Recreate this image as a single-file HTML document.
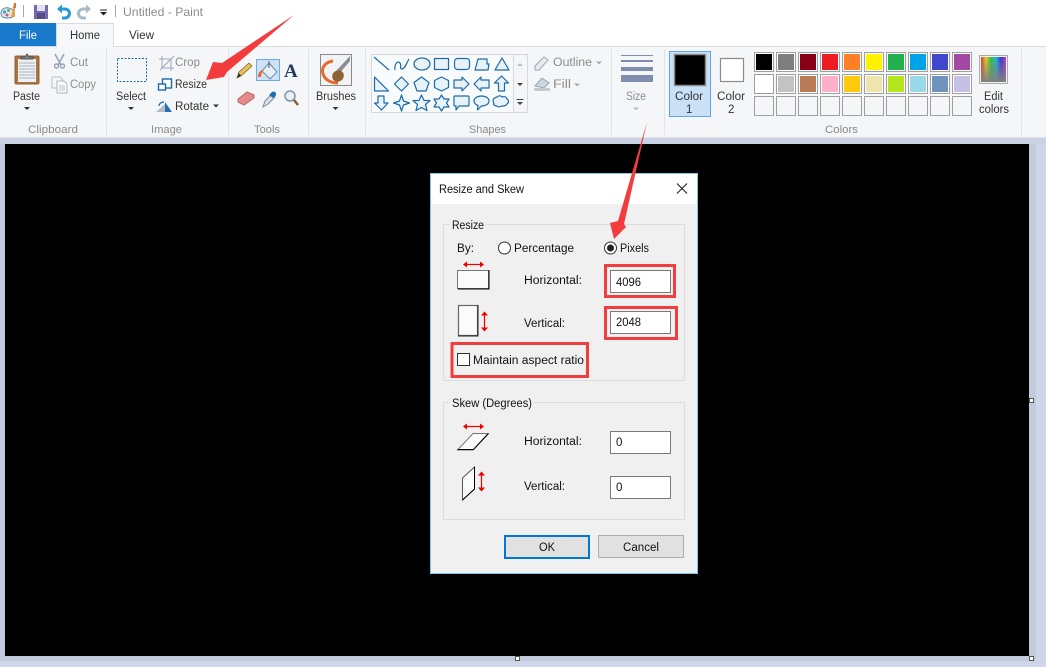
<!DOCTYPE html>
<html><head><meta charset="utf-8"><title>Untitled - Paint</title>
<style>
html,body{margin:0;padding:0;background:#cdd7e8;overflow:hidden}
svg{display:block}
text{font-family:"Liberation Sans",sans-serif;font-size:11.5px;fill:#333}
.g{fill:#8c8c8c}
.l{fill:#8a8a8a;font-size:11px}
.d{fill:#111;font-size:11.5px}
.s{fill:#e8f3f9;stroke:#1f69a8;stroke-width:1.2;stroke-linejoin:round}
</style></head><body>
<svg width="1046" height="667" viewBox="0 0 1046 667" xmlns="http://www.w3.org/2000/svg">
<rect width="1046" height="667" fill="#cdd7e8"/>
<rect x="0" y="138" width="1036" height="523" fill="#c1cbdc"/>
<rect x="0" y="138" width="1046" height="6" fill="#c9d2e2"/>
<!-- title bar -->
<rect width="1046" height="46" fill="#fff"/>
<rect x="0" y="46" width="1046" height="92" fill="#f5f6f7"/>
<rect x="0" y="46" width="1046" height="1" fill="#dadbdc"/>
<rect x="0" y="137" width="1046" height="1" fill="#dde0e5"/>
<!-- QAT icons -->
<path d="M1 13c0-4 4-6 8-5s5 3 5 6-3 4-6 4-7 0-7-5z" fill="#dfe8ee" stroke="#5a8aa8"/>
<circle cx="4.500" cy="12" r="1.600" fill="#36a3d9"/><circle cx="8.500" cy="10.500" r="1.500" fill="#62b34e"/><circle cx="7" cy="15" r="1.500" fill="#e2574c"/>
<path d="M11 17l2-9 2 0 0 9z" fill="#e8a04a"/><path d="M13 8l1-5 2 0 0 5z" fill="#d9792d"/>
<rect x="23" y="5" width="1" height="12" fill="#a5a5a5"/>
<rect x="34" y="5" width="14" height="14" fill="#7468b0"/><rect x="37" y="5" width="8" height="6" fill="#e4e2f0"/><rect x="37" y="13" width="8" height="6" fill="#55507f"/>
<path d="M60 9h5a4.500 4.500 0 0 1 0 9h-3" fill="none" stroke="#2b97d9" stroke-width="3"/><path d="M57 9l5-4.500v9z" fill="#2b97d9"/>
<path d="M88 9h-5a4.500 4.500 0 0 0 0 9h3" fill="none" stroke="#a9bac8" stroke-width="3"/><path d="M91 9l-5-4.500v9z" fill="#a9bac8"/>
<path d="M100 10h7" stroke="#222"/><path d="M100 12h7l-3.500 3.500z" fill="#222"/>
<rect x="115" y="5" width="1" height="12" fill="#a5a5a5"/>
<text x="123" y="16" class="g" style="font-size:12px" textLength="80" lengthAdjust="spacingAndGlyphs">Untitled - Paint</text>
<!-- tabs -->
<rect x="0" y="23" width="56" height="23" fill="#1979ca"/>
<text x="19" y="39" style="fill:#fff;font-size:11.500px" textLength="18" lengthAdjust="spacingAndGlyphs">File</text>
<path d="M56.500 47V23.500H113.500V47" fill="#f5f6f7" stroke="#dadbdc"/>
<rect x="57" y="24" width="56" height="23" fill="#f7f8f9"/>
<text x="70" y="39" textLength="30" lengthAdjust="spacingAndGlyphs">Home</text>
<text x="129" y="39" textLength="25" lengthAdjust="spacingAndGlyphs">View</text>
<!-- separators -->
<g fill="#e2e3e5"><rect x="106" y="49" width="1" height="86"/><rect x="228" y="49" width="1" height="86"/><rect x="308" y="49" width="1" height="86"/><rect x="365" y="49" width="1" height="86"/><rect x="611" y="49" width="1" height="86"/><rect x="664" y="49" width="1" height="86"/><rect x="1021" y="49" width="1" height="86"/></g>
<!-- clipboard -->
<rect x="15" y="56" width="24" height="28" rx="1.500" fill="#a9743f" stroke="#8e6136"/>
<rect x="18" y="59" width="18" height="23" fill="#eef1f4"/>
<path d="M19 63h16M19 66h16M19 69h16M19 72h16M19 75h16M19 78h16" stroke="#a9b4c0"/>
<path d="M21 59v-2h4l2-3 2 3h4v2z" fill="#80868c" stroke="#555"/>
<text x="13" y="100" textLength="27" lengthAdjust="spacingAndGlyphs">Paste</text>
<path d="M24 107h6l-3 3z" fill="#333"/>
<path d="M55 54l6 11M64 54l-6 11" stroke="#9aa7b6" stroke-width="1.600" fill="none"/><circle cx="56.500" cy="66" r="2" fill="none" stroke="#8ea1b6" stroke-width="1.400"/><circle cx="62.500" cy="66" r="2" fill="none" stroke="#8ea1b6" stroke-width="1.400"/>
<text x="70" y="66" class="g" textLength="18" lengthAdjust="spacingAndGlyphs">Cut</text>
<path d="M52 77h8l3 3v8h-11z" fill="#f4f6f8" stroke="#b4c0cc"/><path d="M57 81h7l3 3v9h-10z" fill="#fafbfc" stroke="#a9b6c4"/><path d="M59 86h6M59 88h6M59 90h6" stroke="#b4c0cc"/>
<text x="70" y="88" class="g" textLength="26" lengthAdjust="spacingAndGlyphs">Copy</text>
<text x="28" y="133" class="l" textLength="50" lengthAdjust="spacingAndGlyphs">Clipboard</text>
<!-- image -->
<rect x="117.500" y="58.500" width="29" height="23" fill="none" stroke="#1f69a8" stroke-dasharray="2 1.500"/>
<text x="116" y="100" textLength="30" lengthAdjust="spacingAndGlyphs">Select</text>
<path d="M128 107h6l-3 3z" fill="#333"/>
<path d="M162 56v12h12M159 59h12v12M160 70l14-14" fill="none" stroke="#9aa7bd"/>
<text x="175" y="66" class="g" textLength="25" lengthAdjust="spacingAndGlyphs">Crop</text>
<rect x="162.500" y="79" width="9" height="9" fill="#fff" stroke="#1f69a8" stroke-width="1.400"/>
<rect x="158.500" y="84" width="7" height="6" fill="#fff" stroke="#1f69a8" stroke-width="1.400"/>
<text x="175" y="88" textLength="32" lengthAdjust="spacingAndGlyphs">Resize</text>
<path d="M156 112l9-8v8z" fill="#b4bbc2"/><path d="M165 102l7 10h-7z" fill="#2372b9"/><path d="M159 106c0-2 2-4 5-4" stroke="#2372b9" fill="none" stroke-width="1.400"/>
<text x="175" y="110" textLength="34" lengthAdjust="spacingAndGlyphs">Rotate</text>
<path d="M213 104.500h6l-3 3z" fill="#333"/>
<text x="151" y="133" class="l" textLength="31" lengthAdjust="spacingAndGlyphs">Image</text>
<!-- tools -->
<rect x="256.500" y="59.500" width="23" height="21" fill="#cfe2f5" stroke="#70a9e3"/>
<path d="M237 78l2-6 10-9 3 3-10 9z" fill="#eec04f" stroke="#7c6a3b" stroke-width=".8"/>
<path d="M237 78l1.500-5 3 3z" fill="#333"/>
<path d="M269 63l8 9-7 7-8-8z" fill="#e6eff6" stroke="#6d8cad"/><path d="M258 77c0-4 2-7 6-7-2 2-3 4-3 7z" fill="#e8672a"/><path d="M269 61v7" stroke="#556"/>
<text x="284" y="77" style="font-family:'Liberation Serif',serif;font-size:19px;font-weight:bold;fill:#203a5e">A</text>
<path d="M238 99l9-7 7 3v3l-10 7-6-3z" fill="#e48a8a" stroke="#bd6a6a"/>
<path d="M263 107l2-6 7-7 3 3-7 7z" fill="#d9e3ec" stroke="#7a8a9a"/><path d="M269 95l3-3c2-1 4 0 4 2s-1 2-3 4z" fill="#1e6cb4"/>
<circle cx="290" cy="96" r="5" fill="#e8f1f8" stroke="#8096a9" stroke-width="1.500"/><path d="M294 100l4 5" stroke="#8c5d34" stroke-width="2.500"/>
<text x="254" y="133" class="l" textLength="26" lengthAdjust="spacingAndGlyphs">Tools</text>
<!-- brushes -->
<rect x="320.500" y="54.500" width="31" height="31" fill="#f1f3f4" stroke="#8a8a8a"/>
<path d="M350 56l-14 15 3 3 11-13z" fill="#8a8f96"/>
<path d="M333 61C325 62 321 68 323 74C325 80 331 83 338 83" fill="none" stroke="#e8672a" stroke-width="3"/>
<ellipse cx="338" cy="76" rx="6" ry="5.500" fill="#8e6135" transform="rotate(-40 338 76)"/>
<text x="316" y="100" textLength="40" lengthAdjust="spacingAndGlyphs">Brushes</text>
<path d="M332.500 107h6l-3 3z" fill="#333"/>
<!-- shapes -->
<rect x="371.500" y="54.500" width="156" height="58" fill="#f7fbfc" stroke="#d6d8da"/>
<rect x="513" y="55" width="14" height="57" fill="#f5f6f7"/><rect x="513" y="55" width="1" height="57" fill="#d6d8da"/>
<path d="M517 66l3-3 3 3z" fill="#bbb"/><path d="M517 83h6l-3 3z" fill="#444"/><path d="M516.500 99.500h7" stroke="#444"/><path d="M517 102h6l-3 3z" fill="#444"/>
<path d="M374 57l15 13" fill="none" stroke="#1f69a8" stroke-width="1.200"/>
<path d="M395 70c-1-6 3-10 5-7s-1 6 2 6 5-7 7-10" fill="none" stroke="#1f69a8" stroke-width="1.200"/>
<ellipse class="s" cx="422" cy="64" rx="8" ry="6"/>
<rect class="s" x="434.500" y="58.500" width="14" height="11"/>
<rect class="s" x="454.500" y="58.500" width="15" height="11" rx="3"/>
<path class="s" d="M475 70l3-11h9v5h2l-1 6z"/>
<path class="s" d="M502 58l7 12h-14z"/>
<path class="s" d="M374.500 77v14h14z"/>
<path class="s" d="M401.500 77l7 7-7 7-7-7z"/>
<path class="s" d="M421.500 77l7.500 5.500-3 8.500h-9l-3-8.500z"/>
<path class="s" d="M441.500 77l7 3.500v7l-7 3.500-7-3.500v-7z"/>
<path class="s" d="M454 80h8v-3l7 7-7 7v-3h-8z"/>
<path class="s" d="M489 80h-8v-3l-7 7 7 7v-3h8z"/>
<path class="s" d="M501.500 76l7 7h-4v8h-6v-8h-4z"/>
<path class="s" d="M378 96v7h4l-6.500 7-7-7h3.500v-7z" transform="translate(6,0)"/>
<path class="s" d="M401.500 95l2 6 6 2-6 2-2 6-2-6-6-2 6-2z"/>
<path class="s" d="M421.500 95l2.500 5.500h6l-4.500 4 1.500 6-5.500-3-5.500 3 1.500-6-4.500-4h6z"/>
<path class="s" d="M441.500 95l2.500 4h5l-2.500 4 2.500 4h-5l-2.500 4-2.500-4h-5l2.500-4-2.500-4h5z"/>
<path class="s" d="M455 96h13q1 0 1 1v8q0 1-1 1h-9l-3 4v-4h-1q-1 0-1-1v-8q0-1 1-1z"/>
<path class="s" d="M481.500 96c4 0 7.500 2 7.500 5s-3.500 5-7.500 5l-4 4 .5-4.500c-2-.5-4-2.500-4-4.500 0-3 3.500-5 7.500-5z"/>
<path class="s" d="M497 97c2-2 4-1 5 0 2-1 5 0 5 2 2 1 2 4 0 5-1 2-3 2-5 2-2 1-4 1-5 0-3 0-4-2-3-3-2-2-1-5 3-6z"/>
<text x="469" y="133" class="l" textLength="37" lengthAdjust="spacingAndGlyphs">Shapes</text>
<path d="M535 70l0-4 9-9 4 3-9 10z" fill="#e7ecf1" stroke="#9aa7b6"/>
<text x="553" y="66" class="g" textLength="39" lengthAdjust="spacingAndGlyphs">Outline</text><path d="M596 61.500h6l-3 3z" fill="#aaa"/>
<path d="M535 86l7-8 7 5-5 5z" fill="#cdd5de" stroke="#98a5b3"/><rect x="534" y="88" width="16" height="3" fill="#c2cad3"/>
<text x="553" y="88" class="g" textLength="18" lengthAdjust="spacingAndGlyphs">Fill</text><path d="M574 83.500h6l-3 3z" fill="#aaa"/>
<!-- size -->
<rect x="621" y="55" width="32" height="1" fill="#7f8eaf"/><rect x="621" y="60" width="32" height="2" fill="#7f8eaf"/><rect x="621" y="67" width="32" height="4" fill="#7f8eaf"/><rect x="621" y="75" width="32" height="7" fill="#7f8eaf"/>
<text x="626" y="100" class="g" textLength="20" lengthAdjust="spacingAndGlyphs">Size</text>
<path d="M633 107.500h6l-3 3z" fill="#bbb"/>
<!-- colors -->
<rect x="669.500" y="51.500" width="41" height="65" fill="#c9e0f7" stroke="#62a3e6"/>
<rect x="674.500" y="54.500" width="31" height="31" fill="#000" stroke="#8c8c8c" stroke-width="1.500"/>
<text x="675" y="100" textLength="28" lengthAdjust="spacingAndGlyphs">Color</text><text x="686" y="113">1</text>
<rect x="720.500" y="58.500" width="23" height="23" fill="#fff" stroke="#8c8c8c" stroke-width="1.200"/>
<text x="717" y="100" textLength="28" lengthAdjust="spacingAndGlyphs">Color</text><text x="728" y="113">2</text>
<g stroke="#a0a0a0" fill="#fff">
<rect x="754.500" y="52.500" width="19" height="19"/><rect x="776.500" y="52.500" width="19" height="19"/><rect x="798.500" y="52.500" width="19" height="19"/><rect x="820.500" y="52.500" width="19" height="19"/><rect x="842.500" y="52.500" width="19" height="19"/><rect x="864.500" y="52.500" width="19" height="19"/><rect x="886.500" y="52.500" width="19" height="19"/><rect x="908.500" y="52.500" width="19" height="19"/><rect x="930.500" y="52.500" width="19" height="19"/><rect x="952.500" y="52.500" width="19" height="19"/>
<rect x="754.500" y="74.500" width="19" height="19"/><rect x="776.500" y="74.500" width="19" height="19"/><rect x="798.500" y="74.500" width="19" height="19"/><rect x="820.500" y="74.500" width="19" height="19"/><rect x="842.500" y="74.500" width="19" height="19"/><rect x="864.500" y="74.500" width="19" height="19"/><rect x="886.500" y="74.500" width="19" height="19"/><rect x="908.500" y="74.500" width="19" height="19"/><rect x="930.500" y="74.500" width="19" height="19"/><rect x="952.500" y="74.500" width="19" height="19"/>
</g>
<g stroke="#a0a0a0" fill="#f5f6f7">
<rect x="754.500" y="96.500" width="19" height="19"/><rect x="776.500" y="96.500" width="19" height="19"/><rect x="798.500" y="96.500" width="19" height="19"/><rect x="820.500" y="96.500" width="19" height="19"/><rect x="842.500" y="96.500" width="19" height="19"/><rect x="864.500" y="96.500" width="19" height="19"/><rect x="886.500" y="96.500" width="19" height="19"/><rect x="908.500" y="96.500" width="19" height="19"/><rect x="930.500" y="96.500" width="19" height="19"/><rect x="952.500" y="96.500" width="19" height="19"/>
</g>
<rect x="756" y="54" width="16" height="16" fill="#000"/><rect x="778" y="54" width="16" height="16" fill="#7f7f7f"/><rect x="800" y="54" width="16" height="16" fill="#880015"/><rect x="822" y="54" width="16" height="16" fill="#ed1c24"/><rect x="844" y="54" width="16" height="16" fill="#ff7f27"/><rect x="866" y="54" width="16" height="16" fill="#fff200"/><rect x="888" y="54" width="16" height="16" fill="#22b14c"/><rect x="910" y="54" width="16" height="16" fill="#00a2e8"/><rect x="932" y="54" width="16" height="16" fill="#3f48cc"/><rect x="954" y="54" width="16" height="16" fill="#a349a4"/>
<rect x="756" y="76" width="16" height="16" fill="#fff"/><rect x="778" y="76" width="16" height="16" fill="#c3c3c3"/><rect x="800" y="76" width="16" height="16" fill="#b97a57"/><rect x="822" y="76" width="16" height="16" fill="#ffaec9"/><rect x="844" y="76" width="16" height="16" fill="#ffc90e"/><rect x="866" y="76" width="16" height="16" fill="#efe4b0"/><rect x="888" y="76" width="16" height="16" fill="#b5e61d"/><rect x="910" y="76" width="16" height="16" fill="#99d9ea"/><rect x="932" y="76" width="16" height="16" fill="#7092be"/><rect x="954" y="76" width="16" height="16" fill="#c8bfe7"/>
<defs>
<linearGradient id="rb" x1="0" x2="1" y1="0" y2="0"><stop offset="0" stop-color="#e8302c"/><stop offset=".2" stop-color="#e8d020"/><stop offset=".4" stop-color="#2fc040"/><stop offset=".6" stop-color="#20b8d0"/><stop offset=".8" stop-color="#3038d8"/><stop offset="1" stop-color="#d030c0"/></linearGradient>
<linearGradient id="gv" x1="0" x2="0" y1="0" y2="1"><stop offset="0" stop-color="#808080" stop-opacity="0"/><stop offset="1" stop-color="#808080"/></linearGradient>
</defs>
<rect x="979.500" y="55.500" width="28" height="28" fill="#f4f4f4" stroke="#aaa"/>
<rect x="981" y="57" width="25" height="25" fill="url(#rb)"/><rect x="981" y="57" width="25" height="25" fill="url(#gv)"/>
<text x="984" y="100" textLength="19" lengthAdjust="spacingAndGlyphs">Edit</text>
<text x="979" y="113" textLength="30" lengthAdjust="spacingAndGlyphs">colors</text>
<text x="825" y="133" class="l" textLength="33" lengthAdjust="spacingAndGlyphs">Colors</text>
<!-- canvas -->
<rect x="5" y="144" width="1024" height="512" fill="#000"/>
<rect x="0" y="656" width="1036" height="5" fill="#c1cbdc"/>
<g fill="#fff" stroke="#555"><rect x="1029.500" y="398.500" width="4" height="4"/><rect x="1029.500" y="656.500" width="4" height="4"/><rect x="515.500" y="656.500" width="4" height="4"/></g>
<!-- dialog -->
<rect x="430.500" y="173.500" width="267" height="400" fill="#f0f0f0" stroke="#7fc6e8"/>
<rect x="431" y="174" width="266" height="30" fill="#fff"/>
<text x="439" y="193" class="d" textLength="85" lengthAdjust="spacingAndGlyphs">Resize and Skew</text>
<path d="M677 183.500l10 10M687 183.500l-10 10" stroke="#222" stroke-width="1.100"/>
<rect x="443.500" y="224.500" width="241" height="156" fill="none" stroke="#dcdcdc"/>
<rect x="450" y="220" width="36" height="8" fill="#f0f0f0"/>
<text x="452" y="229" class="d" textLength="32" lengthAdjust="spacingAndGlyphs">Resize</text>
<text x="457" y="252" class="d" textLength="17" lengthAdjust="spacingAndGlyphs">By:</text>
<circle cx="504.500" cy="248" r="6" fill="#fff" stroke="#333"/>
<text x="514" y="252" class="d" textLength="60" lengthAdjust="spacingAndGlyphs">Percentage</text>
<circle cx="610.500" cy="248" r="6" fill="#fff" stroke="#333"/><circle cx="610.500" cy="248" r="3.500" fill="#222"/>
<text x="620" y="252" class="d" textLength="29" lengthAdjust="spacingAndGlyphs">Pixels</text>
<!-- resize icons -->
<path d="M464 264.500h19" stroke="#e00" stroke-width="1.200"/><path d="M463 264.500l4-3v6zM484 264.500l-4-3v6z" fill="#e00"/>
<rect x="457.500" y="270.500" width="31" height="18" fill="#fbfbfb" stroke="#777"/><path d="M458 289h31v-19" fill="none" stroke="#000"/>
<rect x="458.500" y="305.500" width="19" height="30" fill="#fbfbfb" stroke="#666" stroke-width="1.200"/><path d="M478 305v31h-20" fill="none" stroke="#222"/>
<path d="M484.500 313v17" stroke="#e00" stroke-width="1.200"/><path d="M484.500 311.500l-3.500 4h7zM484.500 331.500l-3.500-4h7z" fill="#e00"/>
<text x="524" y="284" class="d" textLength="58" lengthAdjust="spacingAndGlyphs">Horizontal:</text>
<text x="524" y="327" class="d" textLength="41" lengthAdjust="spacingAndGlyphs">Vertical:</text>
<rect x="610.500" y="270.500" width="60" height="22" fill="#fff" stroke="#7a7a7a"/>
<text x="616" y="286" class="d" textLength="25" lengthAdjust="spacingAndGlyphs">4096</text>
<rect x="610.500" y="311.500" width="60" height="22" fill="#fff" stroke="#7a7a7a"/>
<text x="616" y="326" class="d" textLength="25" lengthAdjust="spacingAndGlyphs">2048</text>
<rect x="457.500" y="353.500" width="12" height="12" fill="#fff" stroke="#333"/>
<text x="473" y="364" class="d" textLength="111" lengthAdjust="spacingAndGlyphs">Maintain aspect ratio</text>
<g fill="none" stroke="#f23c3e" stroke-width="3">
<rect x="605.500" y="265.500" width="69" height="31"/>
<rect x="605.500" y="307.500" width="71" height="31"/>
<rect x="452" y="343.500" width="135.500" height="33"/>
</g>
<!-- skew -->
<rect x="443.500" y="402.500" width="241" height="117" fill="none" stroke="#dcdcdc"/>
<rect x="450" y="398" width="84" height="9" fill="#f0f0f0"/>
<text x="452" y="407" class="d" textLength="80" lengthAdjust="spacingAndGlyphs">Skew (Degrees)</text>
<path d="M464 426.500h19" stroke="#e00" stroke-width="1.200"/><path d="M463 426.500l4-3v6zM484 426.500l-4-3v6z" fill="#e00"/>
<path d="M473 433.500h15l-15 16.500h-15.500z" fill="#fbfbfb" stroke="#777"/><path d="M457.500 449.500h16l15-16" fill="none" stroke="#000"/>
<path d="M462.500 478l12-11v22l-12 11z" fill="#fbfbfb" stroke="#555"/><path d="M474.500 467v22l-12 11" fill="none" stroke="#000"/>
<path d="M481.500 474v16" stroke="#e00" stroke-width="1.200"/><path d="M481.500 471.500l-3.500 4h7zM481.500 491.500l-3.500-4h7z" fill="#e00"/>
<text x="524" y="445" class="d" textLength="58" lengthAdjust="spacingAndGlyphs">Horizontal:</text>
<text x="524" y="490" class="d" textLength="41" lengthAdjust="spacingAndGlyphs">Vertical:</text>
<rect x="610.500" y="431.500" width="60" height="22" fill="#fff" stroke="#7a7a7a"/>
<text x="616" y="446" class="d">0</text>
<rect x="610.500" y="476.500" width="60" height="22" fill="#fff" stroke="#7a7a7a"/>
<text x="616" y="491" class="d">0</text>
<rect x="505" y="536" width="84" height="22" fill="#e1e1e1" stroke="#0078d7" stroke-width="2"/>
<text x="539" y="551" class="d" textLength="16" lengthAdjust="spacingAndGlyphs">OK</text>
<rect x="598.500" y="535.500" width="85" height="22" fill="#e1e1e1" stroke="#adadad"/>
<text x="623" y="551" class="d" textLength="36" lengthAdjust="spacingAndGlyphs">Cancel</text>
<!-- arrows -->
<path d="M294 15L222 63L213 62L206 80L224 77L227 72z" fill="#f23c3e"/>
<path d="M647 122L618 221L610 223L614 239L626 227L624 224z" fill="#f23c3e"/>
</svg>
</body></html>
